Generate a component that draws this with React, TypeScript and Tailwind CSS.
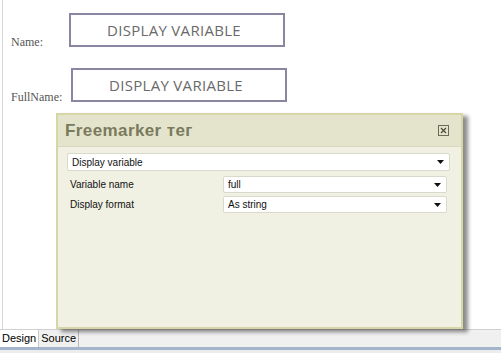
import React from "react";

const serif = { fontFamily: '"Liberation Serif", serif' };
const sans = { fontFamily: '"Liberation Sans", Arial, sans-serif' };

function Arrow() {
  return (
    <svg width="7" height="4" viewBox="0 0 7 4" className="shrink-0">
      <path d="M0 0h7L3.5 4z" fill="#111" />
    </svg>
  );
}

function Select({ value, className }: { value: string; className: string }) {
  return (
    <div
      className={`flex items-center justify-between bg-white border border-[#d9d9cc] rounded-[2px] pl-[4px] pr-[5px] text-[10px] text-[#111] ${className}`}
      style={sans}
    >
      <span>{value}</span>
      <Arrow />
    </div>
  );
}

function VarBox({ className }: { className: string }) {
  return (
    <div
      className={`flex items-center justify-center border-2 border-[#8a86a2] h-[34px] w-[216px] text-[15px] tracking-[0.3px] text-[#6a6a6a] pr-[6px] ${className}`}
      style={{ fontFamily: '"Open Sans", "Noto Sans", sans-serif' }}
    >
      DISPLAY VARIABLE
    </div>
  );
}

export default function App() {
  return (
    <div className="relative w-[501px] h-[353px] bg-white overflow-hidden">
      {/* editor */}
      <div className="h-[329px] ml-[2px] border-l border-[#d6d6d6] pt-[13px]">
        <div className="flex items-end">
          <span className="w-[66px] pl-[8px] text-[12px] text-[#555] leading-none mb-[-1px]" style={serif}>
            Name:
          </span>
          <VarBox className="" />
        </div>
        <div className="flex items-end mt-[21px]">
          <span className="w-[68px] pl-[8px] text-[12px] text-[#555] leading-none mb-[-1px]" style={serif}>
            FullName:
          </span>
          <VarBox className="w-[215px]" />
        </div>
      </div>

      {/* tabs */}
      <div className="flex h-[18px] bg-[#f0f0f0] border-t border-[#d0d0d0]" style={sans}>
        <div className="px-[2px] bg-white text-[11px] leading-[17px] text-black border-r border-[#c8c8c8]">Design</div>
        <div className="px-[2px] text-[11px] leading-[17px] text-black border-r border-[#b8b8b8]">Source</div>
      </div>
      <div className="h-[3px] bg-[#a3b5cc]" />
      <div className="h-[3px] bg-[#ececec]" />

      {/* dialog */}
      <div className="absolute left-[56px] top-[113px] w-[407px] h-[216px] border-2 border-[#d6d6a6] bg-[#f0f0e3] shadow-[5px_3px_4px_rgba(0,0,0,0.45)]">
        <div className="flex items-center justify-between h-[32px] bg-[#e4e4cc] border-b border-[#d8d8bc] pl-[7px] pr-[12px]">
          <span className="text-[17px] font-bold text-[#7a7a5e] tracking-[0.4px]" style={sans}>
            Freemarker тег
          </span>
          <svg width="11" height="11" viewBox="0 0 11 11">
            <rect x="0.5" y="0.5" width="10" height="10" fill="none" stroke="#6a6a5a" />
            <path d="M3 3l5 5M8 3l-5 5" stroke="#4a4a3a" strokeWidth="1.2" />
          </svg>
        </div>
        <div className="pt-[6px] pl-[9px]">
          <Select value="Display variable" className="w-[383px] h-[18px]" />
          <div className="flex items-center mt-[5px] h-[17px]">
            <span className="w-[156px] pl-[3px] text-[10px] text-[#111]" style={sans}>Variable name</span>
            <Select value="full" className="w-[224px] h-[17px]" />
          </div>
          <div className="flex items-center mt-[3px] h-[17px]">
            <span className="w-[156px] pl-[3px] text-[10px] text-[#111]" style={sans}>Display format</span>
            <Select value="As string" className="w-[224px] h-[17px]" />
          </div>
        </div>
      </div>
    </div>
  );
}
